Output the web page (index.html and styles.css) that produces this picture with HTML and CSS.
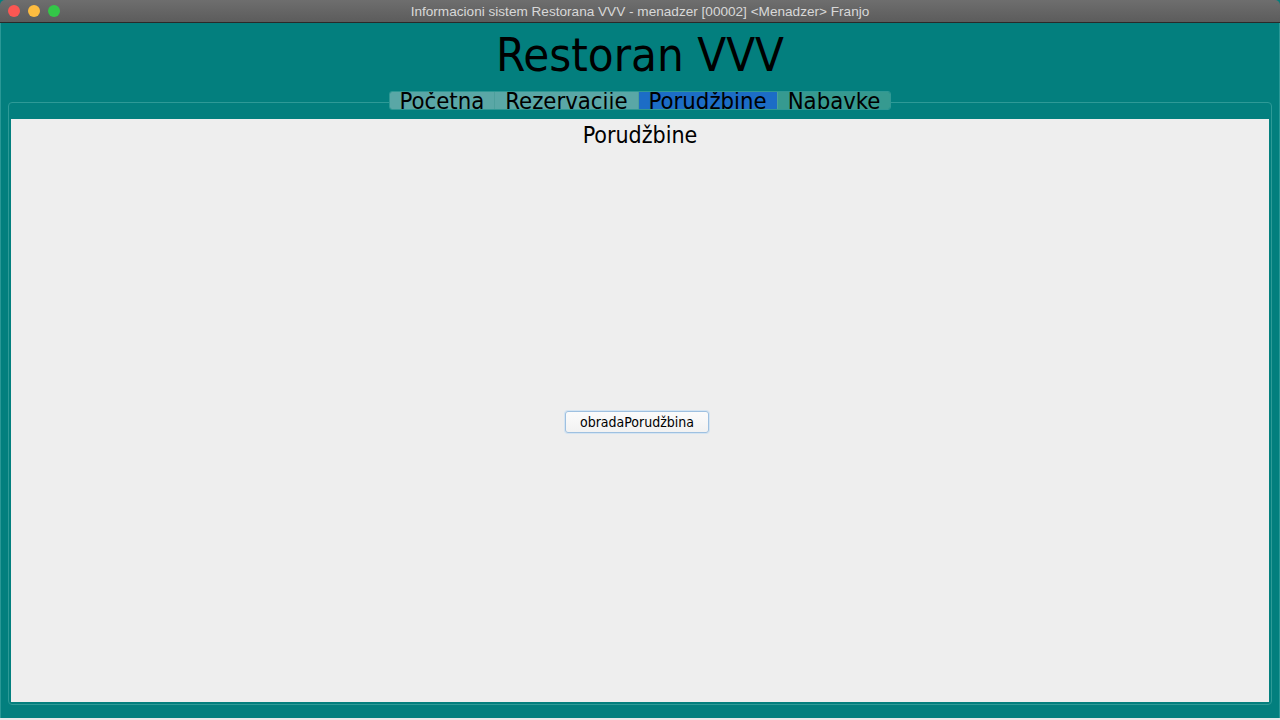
FILE: index.html
```html
<!DOCTYPE html>
<html>
<head>
<meta charset="utf-8">
<link rel="stylesheet" href="styles.css">
</head>
<body>
<div class="window">
  <div class="titlebar">
    <div class="lights">
      <span class="light red"></span>
      <span class="light yellow"></span>
      <span class="light green"></span>
    </div>
    <div class="wintitle">Informacioni sistem Restorana VVV - menadzer [00002] &lt;Menadzer&gt; Franjo</div>
  </div>
  <div class="content">
    <h1 class="apptitle">Restoran VVV</h1>
    <div class="tabs">
      <div class="tab light-tab">Početna</div>
      <div class="tab light-tab">Rezervacije</div>
      <div class="tab active">Porudžbine</div>
      <div class="tab dark-tab">Nabavke</div>
    </div>
    <div class="pane">
      <div class="panel">
        <div class="panel-title">Porudžbine</div>
        <div class="panel-body">
          <button class="btn">obradaPorudžbina</button>
        </div>
      </div>
    </div>
  </div>
</div>
</body>
</html>
```
FILE: styles.css
```css
html, body {
  margin: 0;
  padding: 0;
  width: 1280px;
  height: 720px;
  background: #e8e8e8;
  overflow: hidden;
  font-family: "DejaVu Sans Condensed", "DejaVu Sans", sans-serif;
}
.window {
  height: 718px;
  display: flex;
  flex-direction: column;
  background: #037f7e;
}
.titlebar {
  height: 22px;
  border-bottom: 1px solid #2a2a2a;
  background: linear-gradient(#6e6e6e, #5c5c5c);
  border-radius: 5px 5px 0 0;
  position: relative;
  display: flex;
  align-items: center;
  justify-content: center;
  flex-shrink: 0;
}
.lights {
  position: absolute;
  left: 8px;
  top: 5px;
  display: flex;
  gap: 8px;
}
.light {
  width: 12px;
  height: 12px;
  border-radius: 50%;
  display: block;
}
.red { background: #fc5753; }
.yellow { background: #fdbc40; }
.green { background: #33c748; }
.wintitle {
  font-family: "Liberation Sans", "Helvetica", sans-serif;
  font-size: 13.6px;
  color: #d8d8d8;
}
.content {
  flex: 1;
  display: flex;
  flex-direction: column;
  align-items: center;
  border-left: 1px solid #2a9896;
  border-right: 1px solid #2a9896;
}
.apptitle {
  margin: 0;
  height: 68px;
  font-weight: normal;
  font-size: 47px;
  line-height: 64px;
  color: #000;
  font-family: "DejaVu Sans Condensed", sans-serif;
}
.tabs {
  display: flex;
  height: 19px;
  border: 1px solid #2f9894;
  border-radius: 3px;
  overflow: hidden;
  box-sizing: border-box;
  position: relative;
  z-index: 1;
}
.tab {
  font-size: 23.7px;
  line-height: 19px;
  height: 17px;
  padding: 0 10px;
  color: #000;
  border-right: 1px solid #4d9f9c;
  font-family: "DejaVu Sans Condensed", sans-serif;
}
.tab:last-child { border-right: none; }
.light-tab { background: #5aa7a6; }
.active { background: #1c6dc6; }
.dark-tab { background: #369a90; }
.pane {
  align-self: stretch;
  margin: -8px 7px 0 7px;
  height: 603px;
  border: 1px solid #2e9a97;
  border-radius: 4px;
  padding: 16px 2px 2px 2px;
  box-sizing: border-box;
  display: flex;
}
.panel {
  flex: 1;
  background: #eeeeee;
  display: flex;
  flex-direction: column;
  align-items: center;
}
.panel-title {
  font-size: 23px;
  line-height: 32px;
  color: #000;
}
.panel-body {
  flex: 1;
  display: flex;
  align-items: center;
  justify-content: center;
  padding-bottom: 10px;
  padding-right: 6px;
}
.btn {
  width: 144px;
  height: 22px;
  background: linear-gradient(#fbfbfb, #f2f2f2);
  border: 1px solid #9ec0e0;
  box-shadow: 0 0 0 1px #d4e4f2;
  border-radius: 3px;
  font-family: "DejaVu Sans Condensed", sans-serif;
  font-size: 14px;
  color: #000;
  padding: 0;
}
```
